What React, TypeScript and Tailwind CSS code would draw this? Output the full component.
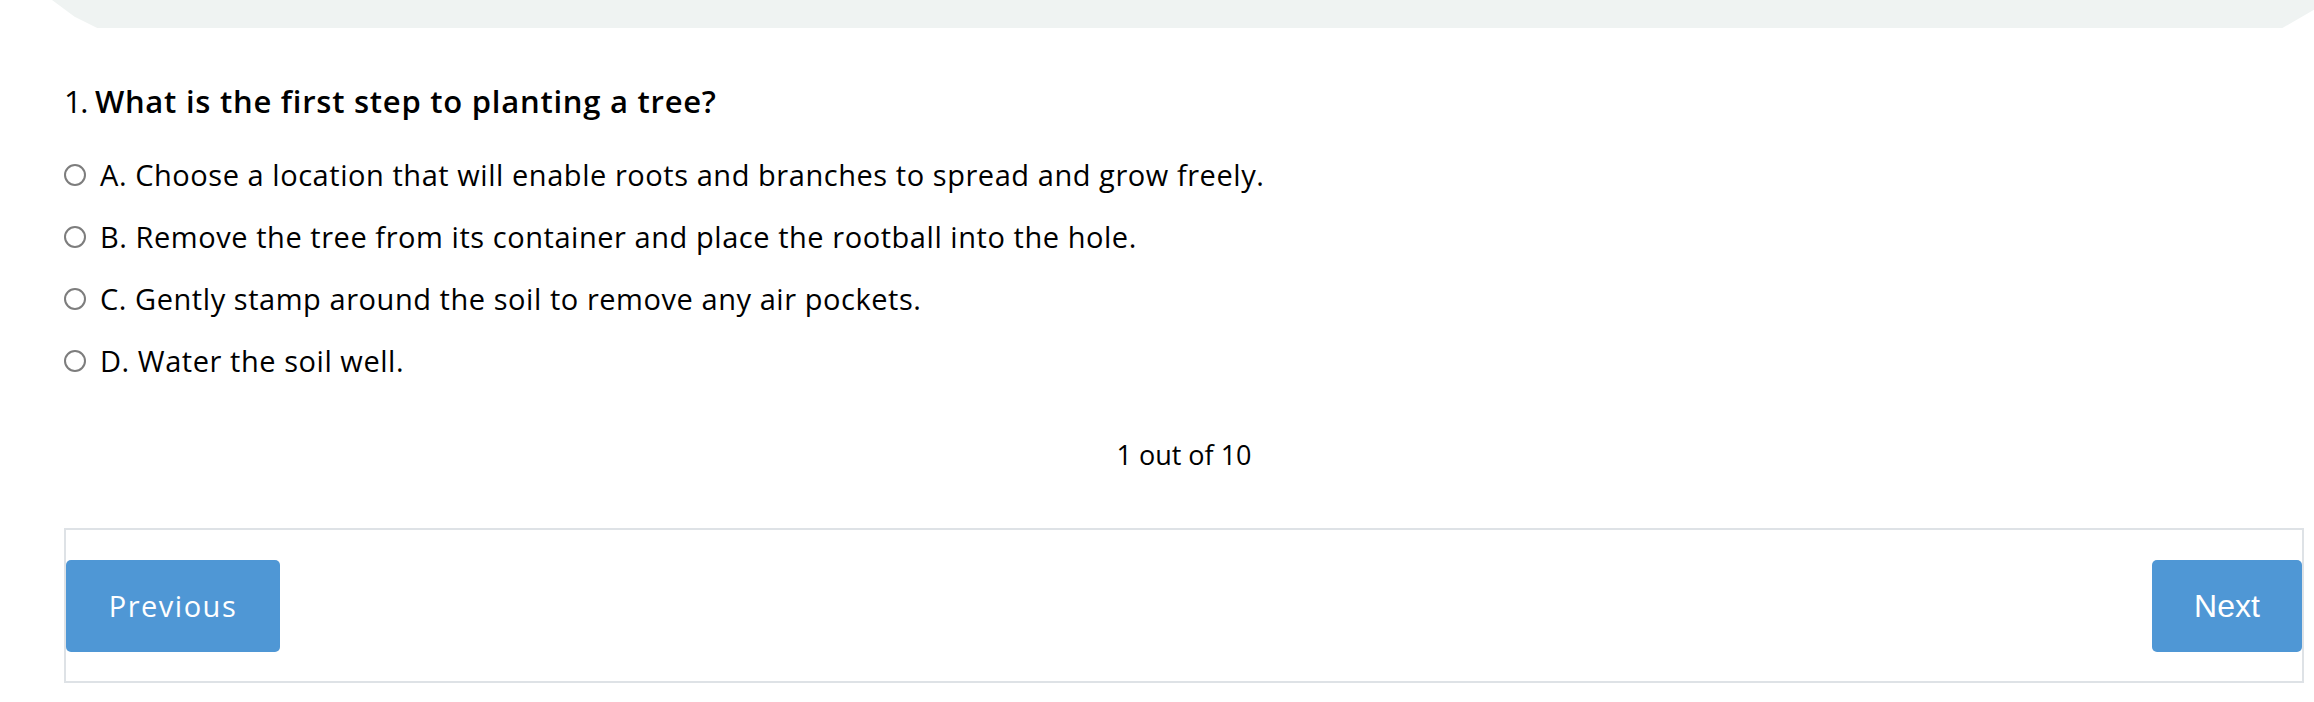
const options = [
  "A. Choose a location that will enable roots and branches to spread and grow freely.",
  "B. Remove the tree from its container and place the rootball into the hole.",
  "C. Gently stamp around the soil to remove any air pockets.",
  "D. Water the soil well.",
];

export default function App() {
  return (
    <div className="w-[2314px] h-[702px] bg-white overflow-hidden text-black" style={{ fontFamily: "'Open Sans', sans-serif" }}>
      {/* top card edge */}
      <div className="h-[28px] ml-[52px] bg-[#eff3f2] [clip-path:polygon(0_0,100%_0,100%_35%,98.6%_100%,2%_100%,1%_60%)]" />

      <div className="pl-[64px] pr-[10px]">
        {/* Question */}
        <div className="mt-[51px] text-[31px] leading-[45px] flex items-baseline gap-[8px]">
          <span className="tracking-[-1.5px]">1.</span>
          <span className="font-semibold tracking-[0.75px]">What is the first step to planting a tree?</span>
        </div>

        {/* Options */}
        <div className="mt-[20px] flex flex-col">
          {options.map((o) => (
            <label key={o} className="h-[62px] flex items-center gap-[14px] text-[29px] tracking-[0.55px]">
              <span className="h-[22px] w-[22px] rounded-full border-2 border-[#7d7d7d] bg-white shrink-0" />
              <span className="leading-[62px]">{o}</span>
            </label>
          ))}
        </div>

        {/* Counter */}
        <div className="mt-[43px] text-center text-[27px] leading-[40px]">1 out of 10</div>

        {/* Nav */}
        <div className="mt-[53px] h-[155px] border-2 border-[#dee2e6] flex items-center justify-between">
          <button className="h-[92px] w-[214px] rounded-[5px] bg-[#4f97d5] text-white text-[29px] tracking-[1.5px]">
            Previous
          </button>
          <button className="h-[92px] w-[150px] rounded-[5px] bg-[#4f97d5] text-white text-[32px]" style={{ fontFamily: "'Liberation Sans', sans-serif" }}>
            Next
          </button>
        </div>
      </div>
    </div>
  );
}
